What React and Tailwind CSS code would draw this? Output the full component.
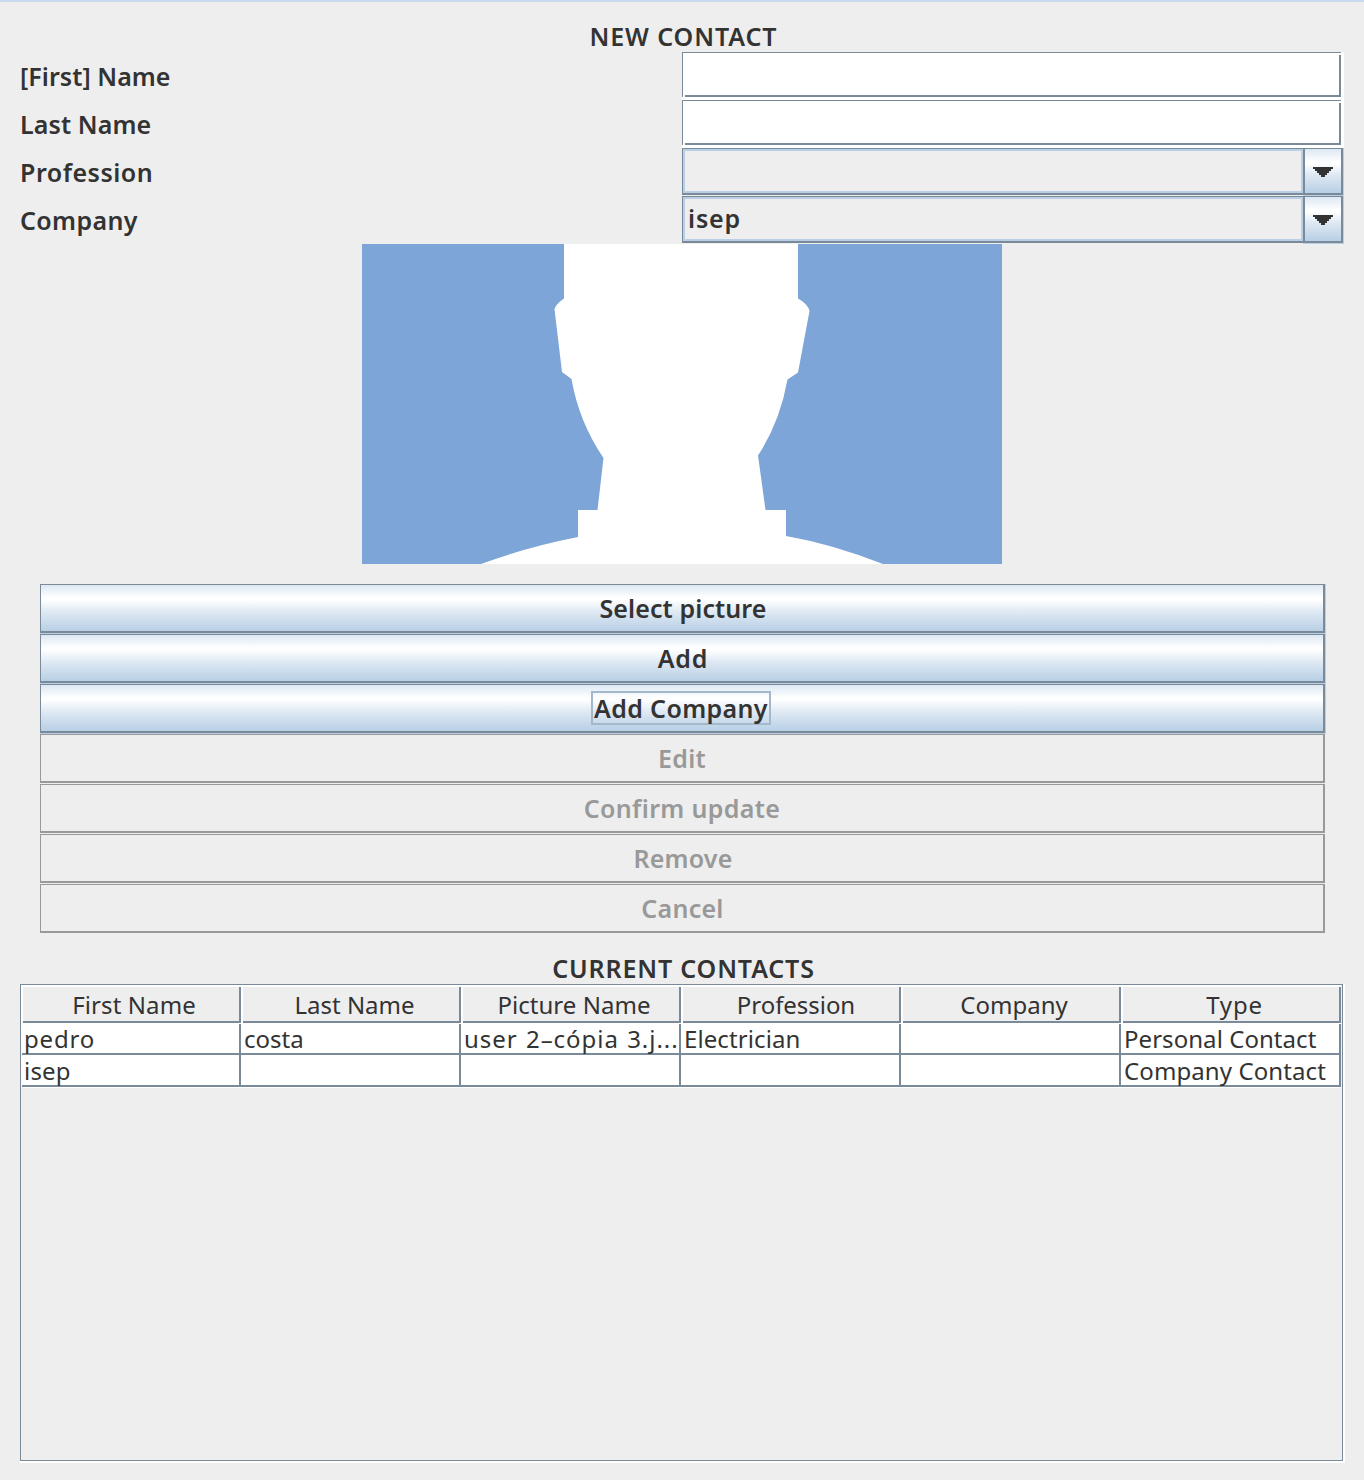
const contactButtons = [
  { label: "Select picture", spacing: "tracking-[0.1px] pl-0.5" },
  { label: "Add", spacing: "tracking-[0.8px] pl-0.5" },
  { label: "Add Company", spacing: "tracking-[0.35px]", focused: true },
  { label: "Edit", spacing: "tracking-[0.3px]", disabled: true },
  { label: "Confirm update", spacing: "tracking-[0.35px]", disabled: true },
  { label: "Remove", spacing: "tracking-[0.2px] pl-0.5", disabled: true },
  { label: "Cancel", spacing: "tracking-[0.25px] pl-px", disabled: true },
];

const columns = [
  { label: "First Name", spacing: "tracking-[0.1px]" },
  { label: "Last Name", spacing: "tracking-[0px] pl-px" },
  { label: "Picture Name", spacing: "tracking-[0.05px]" },
  { label: "Profession", spacing: "tracking-[-0.05px] pl-1" },
  { label: "Company", spacing: "tracking-[0px]" },
  { label: "Type", spacing: "tracking-[0.8px] pl-px" },
];

const rows = [
  [
    { text: "pedro", spacing: "tracking-[0.8px]" },
    { text: "costa", spacing: "tracking-[0px]" },
    { text: "user 2–cópia 3.j...", spacing: "tracking-[0.95px] [word-spacing:1.2px]" },
    { text: "Electrician", spacing: "tracking-[0.1px]" },
    { text: "" },
    { text: "Personal Contact", spacing: "tracking-[0.05px]" },
  ],
  [
    { text: "isep", spacing: "tracking-[0.2px]" },
    { text: "" },
    { text: "" },
    { text: "" },
    { text: "" },
    { text: "Company Contact", spacing: "tracking-[0.1px]" },
  ],
];

function FormRow({ label, spacing, children }) {
  return (
    <div className="flex h-12">
      <label className={`flex w-[662px] items-center text-[25px] leading-8 font-semibold ${spacing}`}>{label}</label>
      {children}
    </div>
  );
}

function TextField() {
  return (
    <div className="h-12 w-[662px] bg-white pr-[3px] pb-[3px]">
      <div className="h-full border-t border-l border-[#7a8a99] pt-0.5 pl-0.5">
        <div className="h-full border-r-2 border-b-2 border-[#7a8a99]" />
      </div>
    </div>
  );
}

function ComboBox({ value }) {
  return (
    <div className="flex h-12 w-[662px]">
      <div className="h-[47px] w-[621px] border-t border-b-2 border-l border-[#7a8a99]">
        <div className="flex h-full items-center border-2 border-[#b8cfe5] pb-0.5 pl-[3px] text-[25px] leading-8 font-semibold tracking-[0.85px]">
          {value}
        </div>
      </div>
      <div className="h-12 w-[41px] border-r border-b border-[#b8cfe5]">
        <div className="flex h-full items-center justify-center border-t border-r-2 border-b-2 border-l-2 border-[#7a8a99] bg-[linear-gradient(#dde8f3_0%,#ffffff_30%,#ffffff_33%,#dde8f3_60%,#b8cfe5_100%)] pt-0.5">
          <svg width="20" height="10" viewBox="0 0 20 10" shapeRendering="crispEdges" className="fill-[#333333]">
            <path d="M0 0H20V2H18V4H16V6H14V8H12V10H8V8H6V6H4V4H2V2H0Z" />
          </svg>
        </div>
      </div>
    </div>
  );
}

function PushButton({ label, spacing, disabled, focused }) {
  if (disabled) {
    return (
      <div className="h-[50px] w-[1285px] pb-px">
        <button
          disabled
          className="flex h-full w-full items-center justify-center border-t border-r-2 border-b-2 border-l border-[#999999] text-[25px] leading-8 font-semibold text-[#999999]"
        >
          <span className={spacing}>{label}</span>
        </button>
      </div>
    );
  }
  return (
    <div className="h-[50px] w-[1286px] border-r border-b border-[#b8cfe5]">
      <button className="flex h-full w-full items-center justify-center border-t border-r-2 border-b-2 border-l border-[#7a8a99] bg-[linear-gradient(#dde8f3_0%,#ffffff_28%,#ffffff_32%,#dde8f3_60%,#b8cfe5_100%)] text-[25px] leading-8 font-semibold">
        <span
          className={
            focused
              ? `${spacing} -ml-0.5 flex h-[34px] w-[180px] items-center justify-center border-2 border-[#a3b8cc] whitespace-nowrap`
              : spacing
          }
        >
          {label}
        </span>
      </button>
    </div>
  );
}

function Portrait() {
  return (
    <svg width="640" height="320" viewBox="0 0 640 320" className="mx-auto block">
      <rect width="640" height="320" fill="#7ea5d8" />
      <path
        fill="#ffffff"
        d="M202 0V54.500Q194 60 192.500 65L200 128L209.500 135Q217 178 241.500 214L235.500 266H216V293Q165 303 119 320H521Q470 300 424 292V266H403.500L396 211.500Q418 178 425.500 135.500L436 128.500L447.500 67Q446 60 436 54.500V0Z"
      />
    </svg>
  );
}

function ContactsTable() {
  return (
    <div className="h-[479px] w-[1325px] border-r-2 border-b-2 border-white">
      <div className="h-full border border-[#7a8a99]">
        <div className="grid w-[1320px] grid-cols-6 border-t border-white">
          {columns.map((column) => (
            <div key={column.label} className="h-[38px] border-b border-white">
              <div className="h-full border-t border-l-2 border-white">
                <div className="flex h-full items-center justify-center border-r-2 border-b-2 border-[#7a8a99] pt-0.5 pl-1.5">
                  <span className={column.spacing}>{column.label}</span>
                </div>
              </div>
            </div>
          ))}
        </div>
        <div className="w-[1320px] border-b border-l border-white">
          {rows.map((row, index) => (
            <div key={index} className={index === 0 ? "flex h-[31px]" : "flex h-8 *:pt-px"}>
              {row.map((cell, column) => (
                <div
                  key={column}
                  className="flex h-full w-[220px] items-center border-r-2 border-b-2 border-[#7a8a99] bg-white pl-[3px] whitespace-nowrap first:w-[219px] first:pl-0.5"
                >
                  <span className={cell.spacing}>{cell.text}</span>
                </div>
              ))}
            </div>
          ))}
        </div>
      </div>
    </div>
  );
}

export default function App() {
  return (
    <main className="h-[1480px] w-[1364px] overflow-hidden border-t-2 border-[#c8daf0] bg-[#eeeeee] pt-[18px] pl-5 font-['Noto_Sans',sans-serif] text-[24px] leading-8 text-[#333333]">
      <h1 className="h-8 w-[1327px] text-center text-[25px] leading-8 font-semibold tracking-[0.9px]">NEW CONTACT</h1>
      <section>
        <FormRow label="[First] Name" spacing="tracking-[0.05px]">
          <TextField />
        </FormRow>
        <FormRow label="Last Name" spacing="tracking-[0.1px]">
          <TextField />
        </FormRow>
        <FormRow label="Profession" spacing="tracking-[0.5px]">
          <ComboBox value="" />
        </FormRow>
        <FormRow label="Company" spacing="tracking-[0.35px]">
          <ComboBox value="isep" />
        </FormRow>
      </section>
      <div className="w-[1324px]">
        <Portrait />
      </div>
      <section className="mt-5 ml-5">
        {contactButtons.map((button) => (
          <PushButton key={button.label} {...button} />
        ))}
      </section>
      <h2 className="mt-[18px] h-8 w-[1327px] text-center text-[25px] leading-8 font-semibold tracking-[0.85px]">
        CURRENT CONTACTS
      </h2>
      <ContactsTable />
    </main>
  );
}
